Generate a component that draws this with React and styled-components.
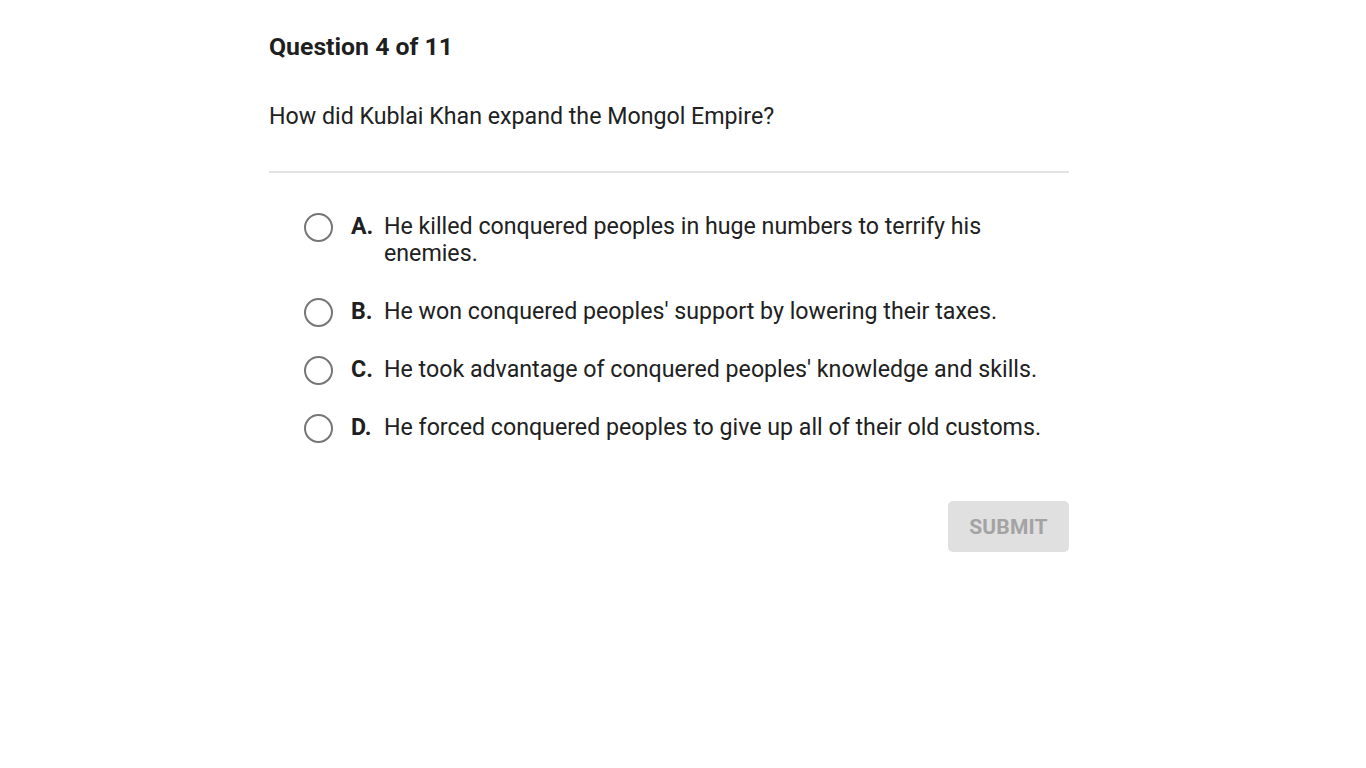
import React, { useState } from 'react';
import styled, { createGlobalStyle } from 'styled-components';

const GlobalStyle = createGlobalStyle`
  body {
    margin: 0;
    background: #ffffff;
    font-family: Roboto, "Liberation Sans", Arial, sans-serif;
    color: #212121;
  }
`;

const Page = styled.div`
  padding: 33px 0 0 269px;
`;

const Card = styled.div`
  width: 800px;
  display: flex;
  flex-direction: column;
`;

const Title = styled.h1`
  margin: 0;
  font-size: 24.8px;
  line-height: 28px;
  font-weight: 700;
  color: #1f1f1f;
`;

const Prompt = styled.p`
  margin: 41px 0 0;
  font-size: 23.2px;
  line-height: 28px;
  font-weight: 400;
  color: #212121;
`;

const Divider = styled.hr`
  margin: 41px 0 0;
  border: none;
  height: 2px;
  background: #e3e3e3;
`;

const Options = styled.ul`
  list-style: none;
  margin: 40px 0 0;
  padding: 0 0 0 35px;
  display: flex;
  flex-direction: column;
  gap: 31px;
`;

const Option = styled.li`
  display: flex;
  align-items: flex-start;
  cursor: pointer;
`;

const Radio = styled.span`
  flex: none;
  box-sizing: border-box;
  width: 29px;
  height: 29px;
  margin-bottom: -2px;
  border-radius: 50%;
  border: 2.5px solid ${(p) => (p.$checked ? '#1976d2' : '#767676')};
  display: flex;
  align-items: center;
  justify-content: center;

  &::after {
    content: '';
    width: 13px;
    height: 13px;
    border-radius: 50%;
    background: ${(p) => (p.$checked ? '#1976d2' : 'transparent')};
  }
`;

const Letter = styled.span`
  flex: none;
  width: 33px;
  margin-left: 18px;
  font-size: 23.2px;
  line-height: 27px;
  font-weight: 700;
  color: #1f1f1f;
`;

const Text = styled.span`
  flex: 1;
  font-size: 23.2px;
  line-height: 27px;
  color: #212121;
`;

const Footer = styled.div`
  display: flex;
  justify-content: flex-end;
  margin-top: 60px;
`;

const SubmitButton = styled.button`
  width: 121px;
  height: 51px;
  border: none;
  border-radius: 5px;
  background: #e0e0e0;
  color: #a3a3a3;
  font-family: Roboto, "Liberation Sans", Arial, sans-serif;
  font-size: 21px;
  font-weight: 700;
  letter-spacing: 0.2px;
  cursor: default;
`;

const choices = [
  { key: 'A', text: 'He killed conquered peoples in huge numbers to terrify his enemies.' },
  { key: 'B', text: "He won conquered peoples' support by lowering their taxes." },
  { key: 'C', text: "He took advantage of conquered peoples' knowledge and skills." },
  { key: 'D', text: 'He forced conquered peoples to give up all of their old customs.' },
];

export default function App() {
  const [selected, setSelected] = useState(null);

  return (
    <>
      <GlobalStyle />
      <Page>
        <Card>
          <Title>Question 4 of 11</Title>
          <Prompt>How did Kublai Khan expand the Mongol Empire?</Prompt>
          <Divider />
          <Options>
            {choices.map((c) => (
              <Option key={c.key} onClick={() => setSelected(c.key)}>
                <Radio $checked={selected === c.key} />
                <Letter>{c.key}.</Letter>
                <Text>{c.text}</Text>
              </Option>
            ))}
          </Options>
          <Footer>
            <SubmitButton disabled={!selected}>SUBMIT</SubmitButton>
          </Footer>
        </Card>
      </Page>
    </>
  );
}
